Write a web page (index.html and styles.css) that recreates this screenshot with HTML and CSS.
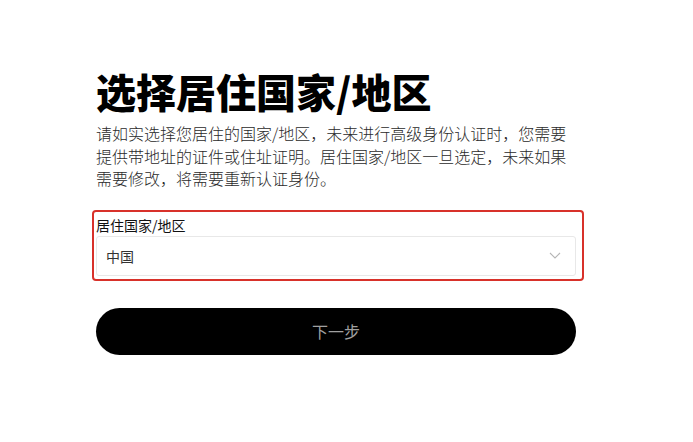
FILE: index.html
```html
<!DOCTYPE html>
<html lang="zh-CN">
<head>
<meta charset="utf-8">
<title>选择居住国家/地区</title>
<link rel="stylesheet" href="styles.css">
</head>
<body>
<main class="page">
  <h1 class="title">选择居住国家/地区</h1>
  <p class="desc">请如实选择您居住的国家/地区，未来进行高级身份认证时，您需要提供带地址的证件或住址证明。居住国家/地区一旦选定，未来如果需要修改，将需要重新认证身份。</p>
  <div class="field">
    <div class="label">居住国家/地区</div>
    <div class="select">
      <span class="value">中国</span>
      <svg class="chev" width="12" height="7" viewBox="0 0 12 7"><path d="M1 1l5 5 5-5" fill="none" stroke="#b5b5b5" stroke-width="1.1"/></svg>
    </div>
    <div class="highlight"></div>
  </div>
  <button class="next">下一步</button>
</main>
</body>
</html>
```
FILE: styles.css
```css
html, body {
  margin: 0;
  padding: 0;
  background: #fff;
}
body {
  font-family: "Noto Sans CJK SC", "Noto Sans", sans-serif;
  color: #111;
}
.page {
  width: 480px;
  padding: 67px 0 0 96px;
}
.title {
  margin: 0;
  font-size: 40px;
  line-height: 48px;
  font-weight: 900;
  color: #000;
}
.desc {
  margin: 7px 0 0;
  font-size: 16px;
  line-height: 22.5px;
  font-weight: 300;
  color: #2a2a2a;
}
.field {
  position: relative;
  margin-top: 24px;
}
.label {
  font-size: 14px;
  line-height: 22px;
  color: #111;
}
.select {
  height: 40px;
  box-sizing: border-box;
  border: 1px solid #e8e8e8;
  border-radius: 3px;
  display: flex;
  align-items: center;
  justify-content: space-between;
  padding: 0 14px 0 9px;
}
.value {
  font-size: 14px;
  color: #333;
}
.chev {
  display: block;
}
.highlight {
  position: absolute;
  top: -4px;
  bottom: -5px;
  left: -4px;
  right: -8px;
  border: 2.5px solid #d8312a;
  border-radius: 4px;
}
.next {
  display: block;
  margin-top: 32px;
  width: 480px;
  height: 47px;
  border: 0;
  border-radius: 24px;
  background: #000;
  color: #a0a0a0;
  font-family: "Noto Sans CJK SC", "Noto Sans", sans-serif;
  font-size: 16px;
  padding: 0;
}
```
